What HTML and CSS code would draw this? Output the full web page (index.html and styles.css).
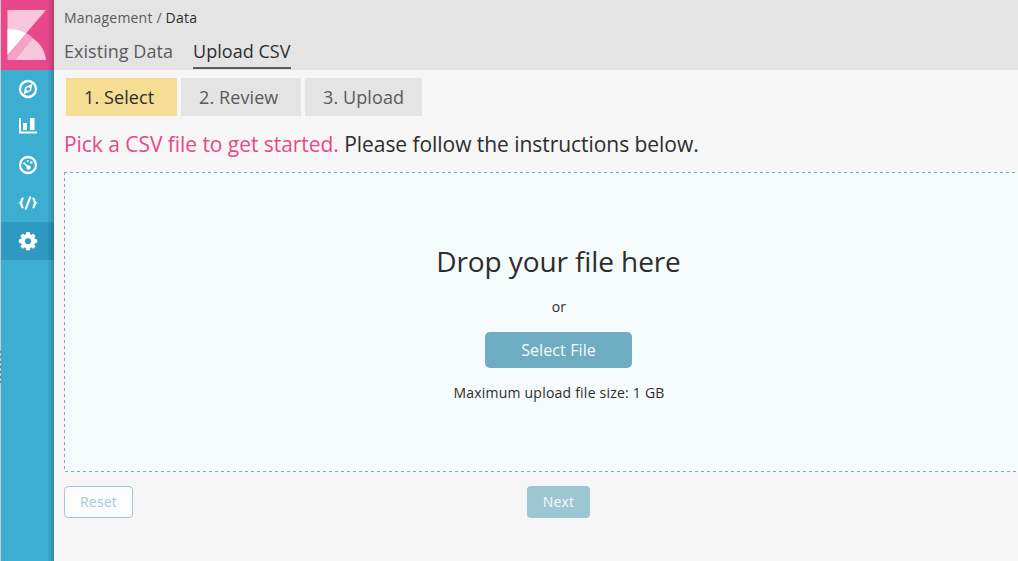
FILE: index.html
```
<!DOCTYPE html>
<html lang="en">
<head>
<meta charset="utf-8">
<title>Upload CSV</title>
<link rel="stylesheet" href="styles.css">
</head>
<body>
<div class="app">
  <div class="edge"><span class="grip"></span></div>
  <nav class="sidebar">
    <a class="logo">
      <svg width="53" height="70" viewBox="0 0 53 70">
        <path fill="#f9c5dc" d="M6.500 10H45L6.500 55z"/>
        <path fill="#fff" d="M6.500 29C13.500 29 20 30.500 25.500 33.300L6.500 55z"/>
        <path fill="#f4a2c5" d="M25.500 33.300C27.800 34.500 29.800 36 31.600 38L14 60H6.500V55.500z"/>
        <path fill="#f9c5dc" d="M31.600 38C39.500 43.500 44 51 45 60H14z"/>
      </svg>
    </a>
    <a class="nav-item"><svg width="20" height="20" viewBox="0 0 20 20"><circle cx="10" cy="10" r="8" fill="none" stroke="#fff" stroke-width="2.300"/><path fill="#fff" fill-rule="evenodd" d="M14.500 4.500L13 11.800 5.500 15.500 7 8.200zM10.200 8.200a1.800 1.800 0 1 0 .01 0z"/></svg></a>
    <a class="nav-item"><svg width="20" height="20" viewBox="0 0 20 20"><path fill="#fff" d="M1 1h2v13.500h16v2H1zM5 6h4v7H5zM12 1h4.500v12H12z"/></svg></a>
    <a class="nav-item"><svg width="20" height="20" viewBox="0 0 20 20"><circle cx="10" cy="10" r="8" fill="none" stroke="#fff" stroke-width="2.300"/><path fill="none" stroke="#fff" stroke-width="1.600" d="M6.500 8.500l3.500 3.500"/><circle cx="10.500" cy="12.500" r="2.200" fill="#fff"/><circle cx="6.200" cy="8.300" r="1" fill="#fff"/><circle cx="9.800" cy="6" r="1" fill="#fff"/><circle cx="13.300" cy="7.500" r="1.300" fill="#fff"/></svg></a>
    <a class="nav-item"><svg width="20" height="20" viewBox="0 0 20 20"><path fill="none" stroke="#fff" stroke-width="2.100" stroke-linejoin="round" d="M5.200 5L3.800 6.400V8L2.200 10l1.600 2v1.600L5.200 15M14.800 5l1.400 1.400V8l1.600 2-1.600 2v1.600L14.800 15M12.500 3.500l-5 13"/></svg></a>
    <a class="nav-item active"><svg width="20" height="20" viewBox="0 0 20 20"><path fill="#fff" fill-rule="evenodd" stroke="#fff" stroke-width=".8" stroke-linejoin="round" d="M8.500 1.500h3l.5 2.300 1.300.5 2-1.200 1.900 1.900-1.200 2 .5 1.300 2.300.5v2.800l-2.300.5-.5 1.300 1.200 2-1.900 1.900-2-1.200-1.300.5-.5 2.300h-3L8 16.600l-1.300-.5-2 1.200-1.900-1.900 1.200-2-.5-1.300-2.300-.5V8.800l2.300-.5.500-1.300-1.200-2 1.900-1.900 2 1.200L8 3.800zM10 6.700a3.500 3.500 0 1 0 .01 0z"/></svg></a>
  </nav>
  <div class="content">
    <header class="top">
      <div class="crumbs">Management / <span>Data</span></div>
      <div class="tabs"><a>Existing Data</a><a class="current">Upload CSV</a></div>
    </header>
    <main>
      <div class="steps"><span class="step on">1. Select</span><span class="step">2. Review</span><span class="step">3. Upload</span></div>
      <h2><span>Pick a CSV file to get started.</span> Please follow the instructions below.</h2>
      <section class="drop">
        <div class="drop-title">Drop your file here</div>
        <div class="or">or</div>
        <button class="select">Select File</button>
        <div class="max">Maximum upload file size: 1 GB</div>
      </section>
      <div class="actions"><button class="reset">Reset</button><button class="next">Next</button></div>
    </main>
  </div>
</div>
</body>
</html>
```
FILE: styles.css
```
* { box-sizing: border-box; }
body { margin: 0; overflow: hidden; background: #f6f6f6; color: #2d2d2d; font-family: "Open Sans", "Noto Sans", sans-serif; font-size: 14px; }
button { font-family: inherit; padding: 0; border: 0; }
.app { display: flex; height: 561px; }
.edge { width: 1px; flex: none; background: #c9c9c9; padding-top: 351px; }
.grip { display: block; height: 32px; background: repeating-linear-gradient(#777 0 2px, #c9c9c9 2px 5px); }
.sidebar { width: 53px; flex: none; background: #3caed2; position: relative; }
.sidebar::after { content: ""; position: absolute; top: 0; right: 0; bottom: 0; width: 7px; background: linear-gradient(to right, rgba(0,0,0,0), rgba(0,0,0,.2)); }
.logo { display: block; height: 70px; background: #e8488b; }
.logo svg { display: block; }
.nav-item { height: 38px; display: flex; align-items: center; padding-left: 17px; }
.nav-item.active { background: #2f99c1; }
.content { flex: 1; min-width: 0; }
.top { height: 70px; padding: 8px 0 0 10px; background: #e4e4e4; color: #5a5a5a; }
.crumbs { line-height: 20px; letter-spacing: .2px; }
.crumbs span { color: #2d2d2d; }
.tabs { display: flex; gap: 20px; padding-top: 10px; font-size: 18px; line-height: 26px; letter-spacing: .04px; }
.tabs a { height: 31px; }
.tabs .current { color: #2d2d2d; border-bottom: 2px solid #5a5a5a; }
main { padding: 8px 0 0 10px; }
.steps { display: flex; gap: 4px; padding-left: 2px; }
.step { width: 117px; height: 38px; padding-left: 18px; font-size: 18px; line-height: 38px; letter-spacing: .1px; background: #e4e4e4; color: #5a5a5a; }
.step.on { width: 111px; background: #f5dd94; color: #2d2d2d; }
.step:nth-child(2) { width: 120px; }
h2 { margin: 13px 0 12px; font-size: 21px; line-height: 31px; font-weight: 400; letter-spacing: -.05px; }
h2 span { color: #e8488b; }
.drop {
  width: 989px; height: 300px; padding-top: 69px;
  display: flex; flex-direction: column; align-items: center;
  background:
    repeating-linear-gradient(to right, #6eadc1 0 3px, transparent 3px 6px) 0 0 / 100% 1px no-repeat,
    repeating-linear-gradient(to right, #6eadc1 0 3px, transparent 3px 6px) 1px 100% / 100% 1px no-repeat,
    repeating-linear-gradient(to bottom, #6eadc1 0 3px, transparent 3px 6px) 0 0 / 1px 100% no-repeat,
    #f5fbfb;
}
.drop-title { font-size: 28px; line-height: 40px; letter-spacing: -.1px; }
.or { margin-top: 16px; padding-left: 1px; line-height: 20px; letter-spacing: .2px; }
.select { width: 147px; height: 36px; margin-top: 15px; border-radius: 5px; background: #6eadc1; color: #f5fbfb; font-size: 16px; letter-spacing: .1px; }
.max { margin-top: 15px; padding-left: 1px; line-height: 20px; letter-spacing: .22px; }
.actions { display: flex; gap: 394px; padding-top: 14px; }
.actions button { height: 32px; padding-bottom: 2px; border-radius: 4px; font-size: 14px; letter-spacing: .2px; }
.reset { width: 69px; border: 1px solid #9fc9d6; background: #fcfcfc; color: #a0cad8; }
.next { width: 63px; background: #9dc6d3; color: #f5fbfb; }
```
